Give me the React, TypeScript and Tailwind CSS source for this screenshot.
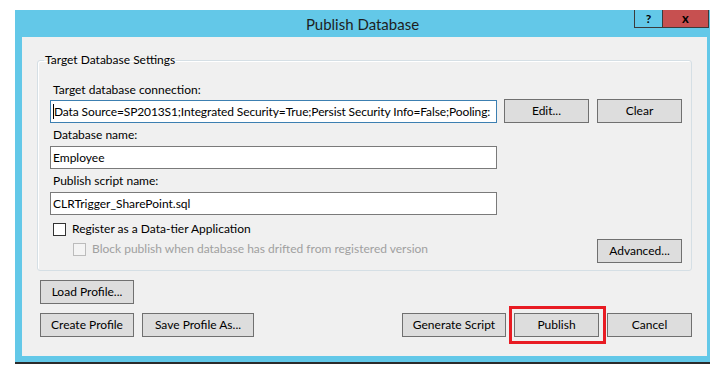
import React from 'react';

const FONT = { fontFamily: 'Lato, "Noto Sans", sans-serif' };

const Btn = ({ w, children }: { w: string; children: React.ReactNode }) => (
  <button
    className={`${w} h-[24px] shrink-0 border border-[#707070] bg-[#dddddd] text-[12px] leading-none text-black flex items-center justify-center`}>
    {children}
  </button>
);

const TextBox = ({ value, focused }: { value: string; focused?: boolean }) => (
  <div
    className={`w-[447px] h-[23px] shrink-0 bg-white border ${focused ? 'border-[#3c7fb1]' : 'border-[#7a7a7a]'} pl-[2px] flex items-center overflow-hidden whitespace-nowrap text-[12px] leading-[16px] text-black`}>
    {focused ? <span className="w-[1px] h-[15px] bg-black shrink-0" /> : null}
    <span className={focused ? 'tracking-[-0.12px]' : ''}>{value}</span>
  </div>
);

const Check = ({ disabled }: { disabled?: boolean }) => (
  <span
    className={`w-[13px] h-[13px] shrink-0 border ${disabled ? 'border-[#bcbcbc] bg-[#f4f4f4]' : 'border-[#333333] bg-white'}`}
  />
);

const Label = ({ h, children }: { h: string; children: React.ReactNode }) => (
  <div className={`${h} pl-[3px] flex items-center text-[12px] leading-none text-black`}>{children}</div>
);

export default function App() {
  return (
    <div className="min-h-[377px] bg-white pt-[10px] pl-[15px]" style={FONT}>
      <div className="w-[695px] bg-[#63c8e8] border-b-2 border-[#2b2b2b]">
        {/* title bar */}
        <div className="relative h-[27px] flex items-center justify-center">
          <span className="text-[15px] leading-none text-[#1e1e1e] pt-[1px]">Publish Database</span>
          <div className="absolute top-0 right-[1px] flex">
            <div className="w-[28px] h-[18px] border-l border-b border-[#3b3b3b] flex items-center justify-center text-[12px] font-bold leading-none text-black">
              ?
            </div>
            <div className="w-[47px] h-[18px] bg-[#c75050] border-l border-r border-b border-[#3b3b3b] flex items-center justify-center text-[13px] font-bold leading-none text-black">
              x
            </div>
          </div>
        </div>

        {/* client area */}
        <div className="ml-[7px] mr-[3px] mb-[6px] h-[319px] bg-[#f0f0f0] pt-[15px]">
          <fieldset className="mx-[15px] border border-[#d5dfe5] rounded-[3px] shadow-[inset_1px_1px_0_#ffffff]">
            <legend className="ml-[6px] px-[1px] text-[12px] leading-[16px] text-black">Target Database Settings</legend>
            <div className="pl-[12px] pr-[9px] pb-[7px]">
              <div className="mt-[12px]">
                <Label h="h-[19px]">Target database connection:</Label>
              </div>
              <div className="h-[24px] flex items-end">
                <TextBox
                  focused
                  value="Data Source=SP2013S1;Integrated Security=True;Persist Security Info=False;Pooling:"
                />
                <div className="ml-[7px] flex gap-[8px]">
                  <Btn w="w-[85px]">Edit...</Btn>
                  <Btn w="w-[85px]">Clear</Btn>
                </div>
              </div>
              <Label h="h-[23px]">Database name:</Label>
              <TextBox value="Employee" />
              <Label h="h-[23px]">Publish script name:</Label>
              <TextBox value="CLRTrigger_SharePoint.sql" />
              <div className="mt-[4px] h-[20px] pl-[3px] flex items-center gap-[6px] text-[12px] leading-none text-black">
                <Check />
                <span>Register as a Data-tier Application</span>
              </div>
              <div className="h-[24px] flex items-start justify-between">
                <div className="h-[20px] pl-[23px] flex items-center gap-[6px] text-[12px] leading-none text-[#a0a0a0]">
                  <Check disabled />
                  <span>Block publish when database has drifted from registered version</span>
                </div>
                <Btn w="w-[85px]">Advanced...</Btn>
              </div>
            </div>
          </fieldset>

          <div className="mt-[9px] pl-[18px]">
            <Btn w="w-[94px]">Load Profile...</Btn>
          </div>

          <div className="mt-[2px] h-[38px] pl-[18px] pr-[15px] flex items-center justify-between">
            <div className="flex gap-[8px]">
              <Btn w="w-[94px]">Create Profile</Btn>
              <Btn w="w-[112px]">Save Profile As...</Btn>
            </div>
            <div className="flex items-center">
              <Btn w="w-[104px]">Generate Script</Btn>
              <div className="ml-[3px] border-[3px] border-[#e81b23] pl-[2px] pr-[4px] py-[4px]">
                <Btn w="w-[85px]">Publish</Btn>
              </div>
              <div className="ml-[1px]">
                <Btn w="w-[85px]">Cancel</Btn>
              </div>
            </div>
          </div>
        </div>
      </div>
    </div>
  );
}
